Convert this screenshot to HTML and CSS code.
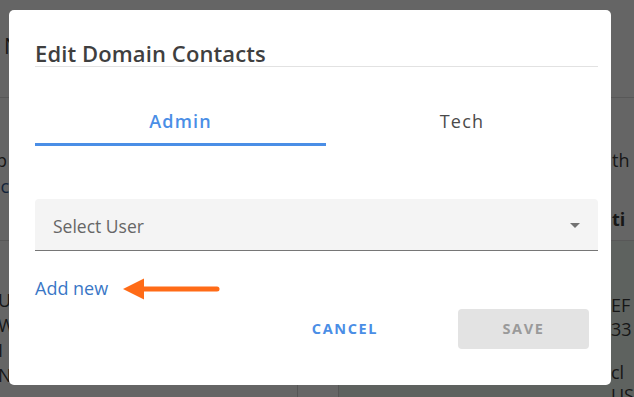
FILE: index.html
```html
<!DOCTYPE html>
<html lang="en">
<head>
<meta charset="utf-8">
<title>Edit Domain Contacts</title>
<link rel="stylesheet" href="styles.css">
</head>
<body>
<div class="page">
  <div class="bg-header"><span class="bg-h1">N</span></div>
  <div class="bg-section">
    <div class="bg-left">
      <div class="bg-line">b</div>
      <div class="bg-line bg-link">ic</div>
    </div>
    <div class="bg-right">
      <div class="bg-line">th</div>
      <div class="bg-line bg-bold">ti</div>
    </div>
  </div>
  <div class="bg-table">
    <div class="bg-cell">
      <div class="bg-line">U</div>
      <div class="bg-line">W</div>
      <div class="bg-line">I</div>
      <div class="bg-line">N</div>
    </div>
    <div class="bg-cell bg-mid"></div>
    <div class="bg-cell bg-green">
      <div class="bg-line">EF</div>
      <div class="bg-line">33</div>
      <div class="bg-line bg-gap">cl</div>
      <div class="bg-line">US</div>
    </div>
  </div>
</div>

<div class="modal">
  <h2 class="title">Edit Domain Contacts</h2>
  <div class="tabs">
    <button class="tab active">Admin</button>
    <button class="tab">Tech</button>
  </div>
  <div class="select">
    <span class="placeholder">Select User</span>
    <span class="caret"></span>
  </div>
  <div class="add-row">
    <a class="add-link">Add new</a>
    <svg class="arrow" width="98" height="22" viewBox="0 0 98 22">
      <line x1="18" y1="11" x2="94" y2="11" stroke="#ff6b17" stroke-width="5" stroke-linecap="round"/>
      <polygon points="0,11 21,0.5 21,21.5" fill="#ff6b17"/>
    </svg>
  </div>
  <div class="actions">
    <button class="btn btn-text">CANCEL</button>
    <button class="btn btn-disabled">SAVE</button>
  </div>
</div>
</body>
</html>
```
FILE: styles.css
```css
* { box-sizing: border-box; }
html, body { margin: 0; padding: 0; }
body {
  width: 634px;
  height: 397px;
  overflow: hidden;
  background: #656565;
  font-family: "Open Sans", "Noto Sans", sans-serif;
  position: relative;
}

/* background page (behind overlay) */
.page { width: 634px; color: #161616; font-size: 18px; }
.bg-header {
  height: 98px;
  border-bottom: 1px solid #585858;
  padding: 31px 0 0 4px;
}
.bg-h1 { font-size: 21px; line-height: 30px; }
.bg-section {
  height: 143px;
  border-bottom: 1px solid #585858;
  display: grid;
  grid-template-columns: 611px 1fr;
  padding-top: 49px;
}
.bg-left { margin-left: -4px; }
.bg-right { padding-left: 1px; }
.bg-section .bg-left .bg-line { line-height: 26px; }
.bg-section .bg-right .bg-line:first-child { line-height: 26px; margin-bottom: 34px; }
.bg-link { color: #13233a; }
.bg-bold { font-weight: 700; }
.bg-table {
  display: grid;
  grid-template-columns: 297px 42px 1fr;
  height: 160px;
}
.bg-cell { padding-top: 47px; }
.bg-cell .bg-line { line-height: 25px; margin-left: -2px; }
.bg-mid { border-left: 1px solid #555; border-right: 1px solid #555; background: #666; }
.bg-green { background: #5e625f; padding-left: 272px; padding-top: 52px; }
.bg-green .bg-line { line-height: 24px; margin-left: 0; }
.bg-green .bg-gap { margin-top: 20px; line-height: 22px; }

/* modal */
.modal {
  position: absolute;
  left: 9px;
  top: 10px;
  width: 602px;
  height: 375px;
  background: #fff;
  border-radius: 5px;
  padding: 30px 13px 0 26px;
  display: flex;
  flex-direction: column;
}
.title {
  margin: 0;
  font-size: 22px;
  font-weight: 600;
  line-height: 26px;
  color: #3f3f3f;
  border-bottom: 1px solid #e2e2e2;
  letter-spacing: 0.1px;
}
.tabs {
  margin-top: 31px;
  display: grid;
  grid-template-columns: 291px 1fr;
}
.tab {
  height: 48px;
  border: none;
  background: none;
  border-bottom: 3px solid transparent;
  font-family: inherit;
  font-size: 18px;
  letter-spacing: 1.2px;
  color: #4a4a4a;
  padding: 0;
  cursor: pointer;
}
.tab.active {
  color: #4a8ee6;
  font-weight: 600;
  border-bottom-color: #4a8ee6;
}
.select {
  margin-top: 53px;
  height: 52px;
  background: #f4f4f4;
  border-radius: 4px 4px 0 0;
  border-bottom: 1px solid #767676;
  display: flex;
  align-items: center;
  justify-content: space-between;
  padding: 2px 18px 0 18px;
}
.placeholder { font-size: 17.5px; color: #666; }
.caret {
  width: 0;
  height: 0;
  border-left: 5px solid transparent;
  border-right: 5px solid transparent;
  border-top: 5px solid #727272;
  margin-top: -1px;
}
.add-row {
  margin-top: 25px;
  height: 24px;
  display: flex;
  align-items: center;
  gap: 15px;
}
.add-link {
  font-size: 18px;
  color: #3a77c6;
  line-height: 24px;
  cursor: pointer;
}
.arrow { display: block; margin-top: 1px; }
.actions {
  margin-top: 9px;
  display: flex;
  justify-content: flex-end;
  align-items: center;
  gap: 65px;
  padding-right: 9px;
}
.btn {
  font-family: inherit;
  font-weight: 700;
  font-size: 14.5px;
  letter-spacing: 1.6px;
  border: none;
  height: 40px;
  border-radius: 4px;
  cursor: pointer;
  padding-bottom: 2px;
}
.btn-text { background: none; color: #4a8ee6; padding: 0 15px 2px 17px; }
.btn-disabled { background: #e3e3e3; color: #9a9a9a; width: 131px; }
```
